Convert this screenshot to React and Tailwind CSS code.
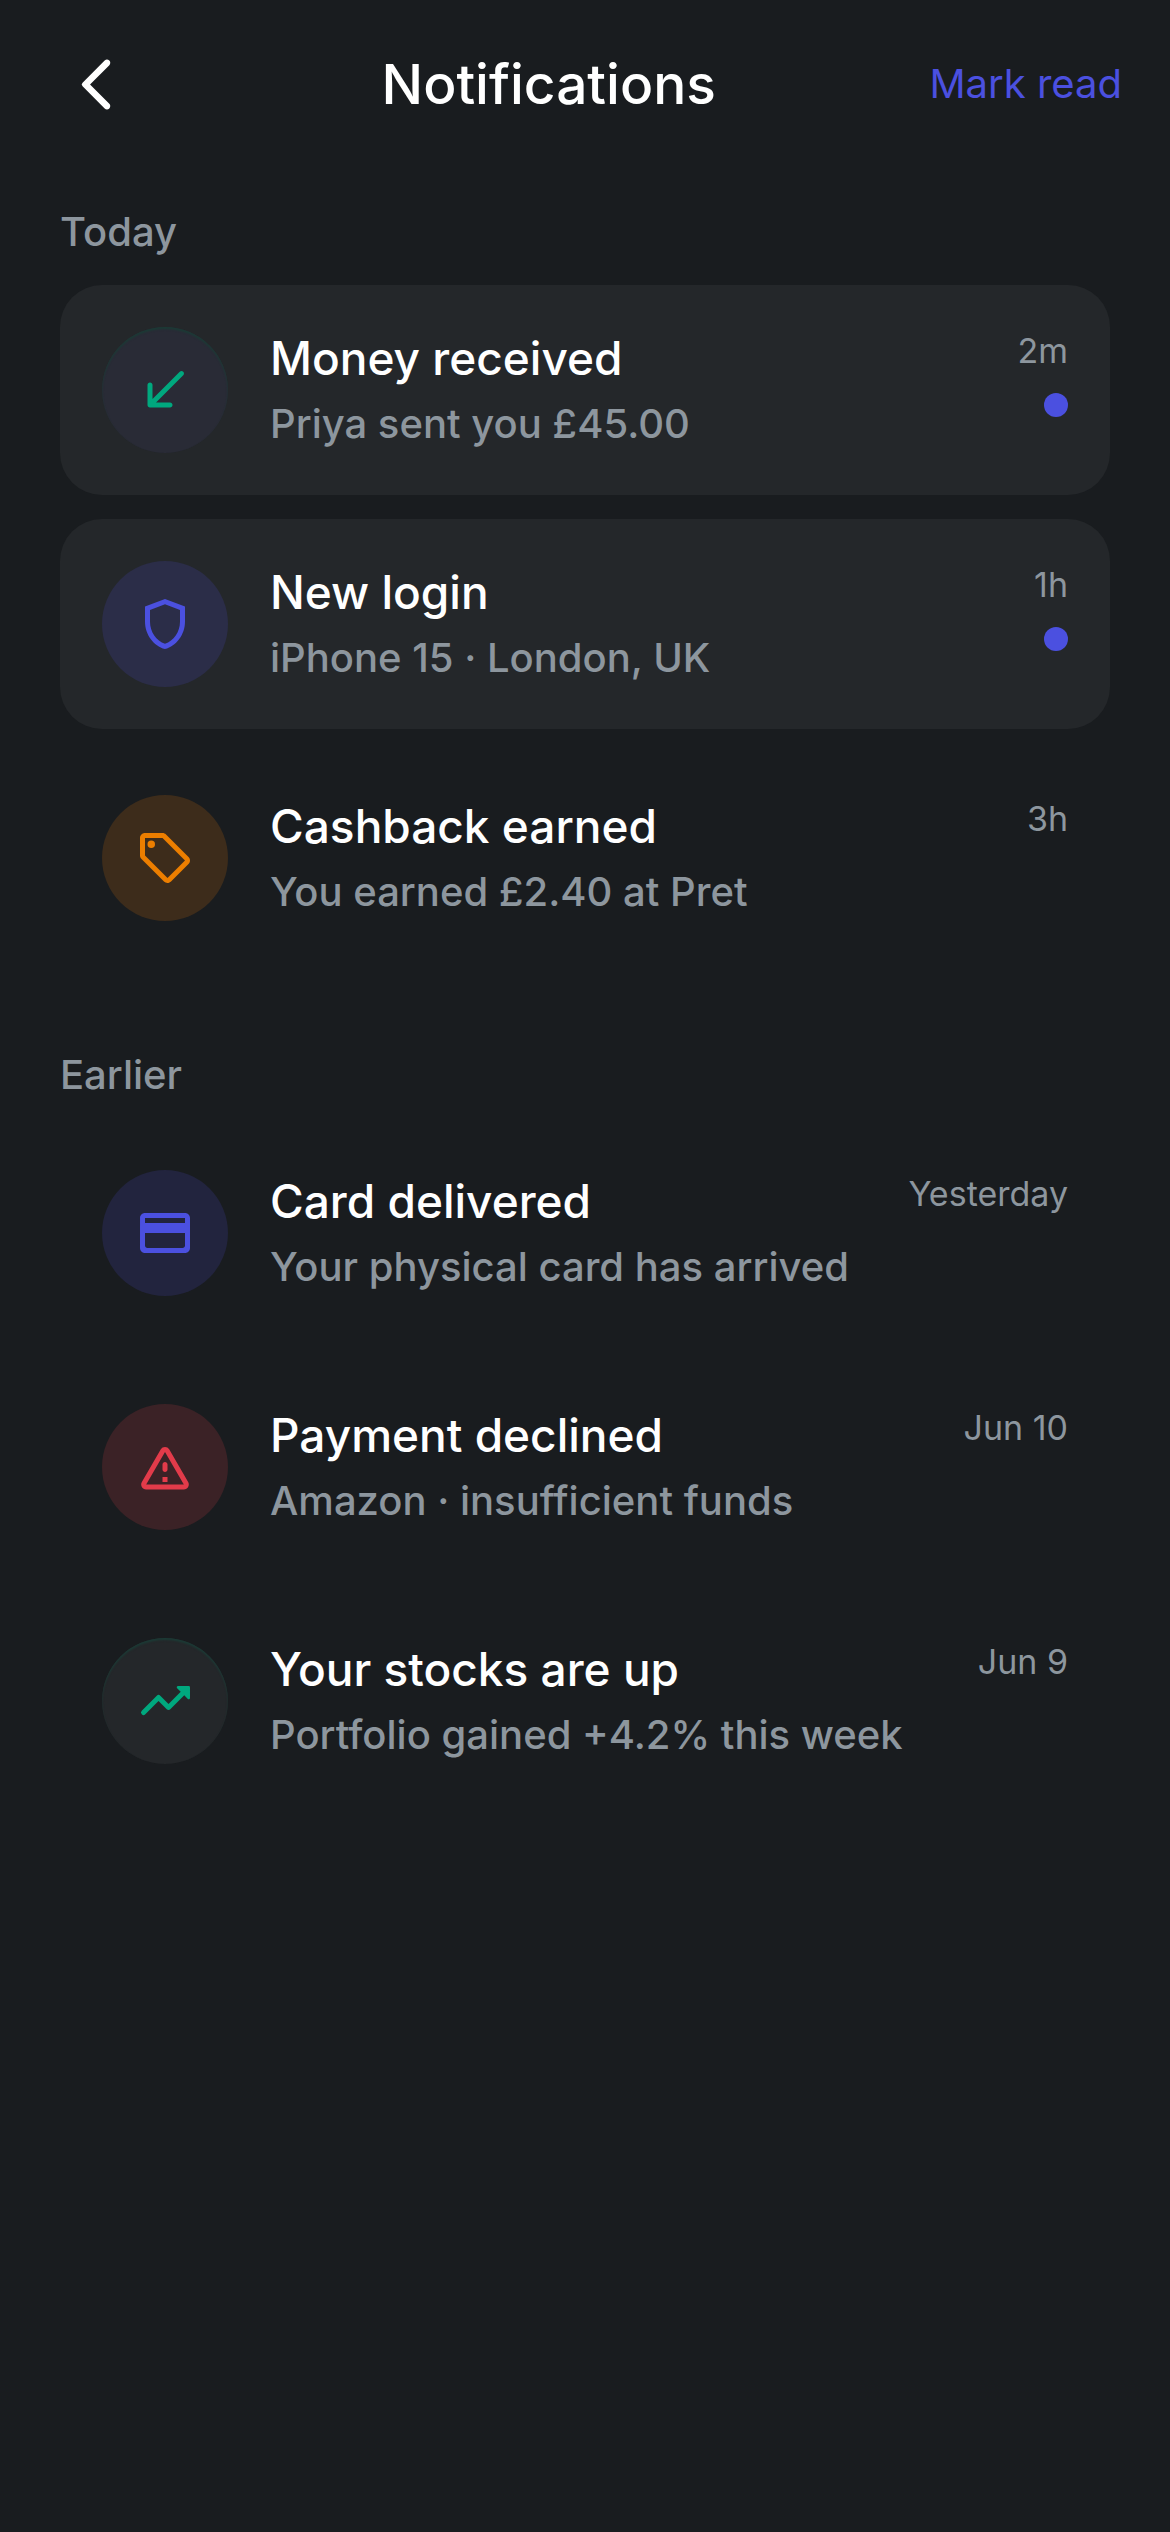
import React, { useState } from 'react'

// 24x24 rounded icon shapes
const icons = {
    back: 'M16.88 2.88a1.25 1.25 0 0 0-1.77 0L6.7 11.29a.996.996 0 0 0 0 1.41l8.41 8.41c.49.49 1.28.49 1.77 0s.49-1.28 0-1.77L9.54 12l7.35-7.35c.48-.49.48-1.28-.01-1.77z',
    received:
        'M19.3 4.71a.996.996 0 0 0-1.41 0L7 15.59V10c0-.55-.45-1-1-1s-1 .45-1 1v8c0 .55.45 1 1 1h8c.55 0 1-.45 1-1s-.45-1-1-1H8.41L19.29 6.12c.39-.39.39-1.03.01-1.41z',
    shield: 'M12 2L4 5v6.09c0 5.05 3.41 9.76 8 10.91 4.59-1.15 8-5.86 8-10.91V5l-8-3zm6 9.09c0 4-2.55 7.7-6 8.83-3.45-1.13-6-4.82-6-8.83v-4.7l6-2.25 6 2.25v4.7z',
    tag: 'M21.41 11.58l-9-9C12.05 2.22 11.55 2 11 2H4c-1.1 0-2 .9-2 2v7c0 .55.22 1.05.59 1.42l9 9c.36.36.86.58 1.41.58s1.05-.22 1.41-.59l7-7c.37-.36.59-.86.59-1.41s-.23-1.06-.59-1.42zM13 20.01L4 11V4h7v-.01l9 9-7 7.02zM6.5 5a1.5 1.5 0 1 0 0 3 1.5 1.5 0 0 0 0-3z',
    card: 'M20 4H4c-1.11 0-1.99.89-1.99 2L2 18c0 1.11.89 2 2 2h16c1.11 0 2-.89 2-2V6c0-1.11-.89-2-2-2zm-1 14H5c-.55 0-1-.45-1-1v-5h16v5c0 .55-.45 1-1 1zm1-10H4V6h16v2z',
    warning:
        'M12 5.99L19.53 19H4.47L12 5.99M2.74 18c-.77 1.33.19 3 1.73 3h15.06c1.54 0 2.5-1.67 1.73-3L13.73 4.99c-.77-1.33-2.69-1.33-3.46 0L2.74 18zM11 11v2c0 .55.45 1 1 1s1-.45 1-1v-2c0-.55-.45-1-1-1s-1 .45-1 1zm0 5h2v2h-2z',
    trending:
        'M16.85 6.85l1.44 1.44-4.88 4.88-3.29-3.29a.996.996 0 0 0-1.41 0l-6 6.01a.996.996 0 1 0 1.41 1.41L9.41 12l3.29 3.29c.39.39 1.02.39 1.41 0l5.59-5.58 1.44 1.44c.31.31.85.09.85-.35V6.5a.485.485 0 0 0-.49-.5h-4.29c-.45 0-.67.54-.36.85z'
}

const sections = [
    {
        title: 'Today',
        items: [
            { id: 1, icon: 'received', tone: 'bg-[#292b36] text-[#00a87e] shadow-[inset_0_2px_2px_#1b3a35]', title: 'Money received', message: 'Priya sent you £45.00', time: '2m', unread: true },
            { id: 2, icon: 'shield', tone: 'bg-[#2b2d48] text-[#4b50e0]', title: 'New login', message: 'iPhone 15 · London, UK', time: '1h', unread: true },
            { id: 3, icon: 'tag', tone: 'bg-[#3d2c1b] text-[#ec7e00]', title: 'Cashback earned', message: 'You earned £2.40 at Pret', time: '3h' }
        ]
    },
    {
        title: 'Earlier',
        items: [
            { id: 4, icon: 'card', tone: 'bg-[#22243e] text-[#4b50e0]', title: 'Card delivered', message: 'Your physical card has arrived', time: 'Yesterday' },
            { id: 5, icon: 'warning', tone: 'bg-[#3b2226] text-[#e23b4a]', title: 'Payment declined', message: 'Amazon · insufficient funds', time: 'Jun 10' },
            { id: 6, icon: 'trending', tone: 'bg-[#24272a] text-[#00a87e] shadow-[inset_0_2px_2px_#1b3a35]', title: 'Your stocks are up', message: 'Portfolio gained +4.2% this week', time: 'Jun 9' }
        ]
    }
]

const Icon = ({ name, className }) => (
    <svg viewBox="0 0 24 24" fill="currentColor" aria-hidden="true" className={className}>
        <path d={icons[name]} />
    </svg>
)

const NotificationItem = ({ item, unread }) => (
    <li className={`flex items-center gap-[42px] rounded-[42px] p-[42px] ${unread ? 'bg-[#24272a]' : ''}`}>
        <div className={`flex size-[126px] shrink-0 items-center justify-center rounded-full ${item.tone}`}>
            <Icon name={item.icon} className="size-[60px]" />
        </div>
        <div className="min-w-0 flex-1 space-y-2">
            <h3 className="text-[46px] leading-[60px] font-[450] text-white">{item.title}</h3>
            <p className="text-[40px] leading-[56px] font-[450]">{item.message}</p>
        </div>
        <div className="flex shrink-0 flex-col items-end gap-[18px] self-start">
            <time className="text-[34px] leading-[48px]">{item.time}</time>
            {unread && <span className="size-6 rounded-full bg-[#4b50e0]" />}
        </div>
    </li>
)

const App = () => {
    const [allRead, setAllRead] = useState(false)

    return (
        <div className="min-h-screen bg-[#191c1f] font-['Inter',sans-serif] text-[#8d969e] [font-optical-sizing:none]">
            <header className="flex items-center justify-between py-3 pr-12 pl-6">
                <button aria-label="Back" className="flex size-36 items-center justify-center text-white">
                    <Icon name="back" className="size-[63px]" />
                </button>
                <h1 className="text-[55px] leading-[72px] font-[450] text-white">Notifications</h1>
                <button className="text-[40px] text-[#4b50e0]" onClick={() => setAllRead(true)}>
                    Mark read
                </button>
            </header>

            <main className="space-y-[84px] px-[60px] pt-9">
                {sections.map((section) => (
                    <section key={section.title}>
                        <h2 className="mb-[25px] text-[40px] leading-[56px] font-[450]">{section.title}</h2>
                        <ul className="space-y-6">
                            {section.items.map((item) => (
                                <NotificationItem key={item.id} item={item} unread={item.unread && !allRead} />
                            ))}
                        </ul>
                    </section>
                ))}
            </main>
        </div>
    )
}

export default App
